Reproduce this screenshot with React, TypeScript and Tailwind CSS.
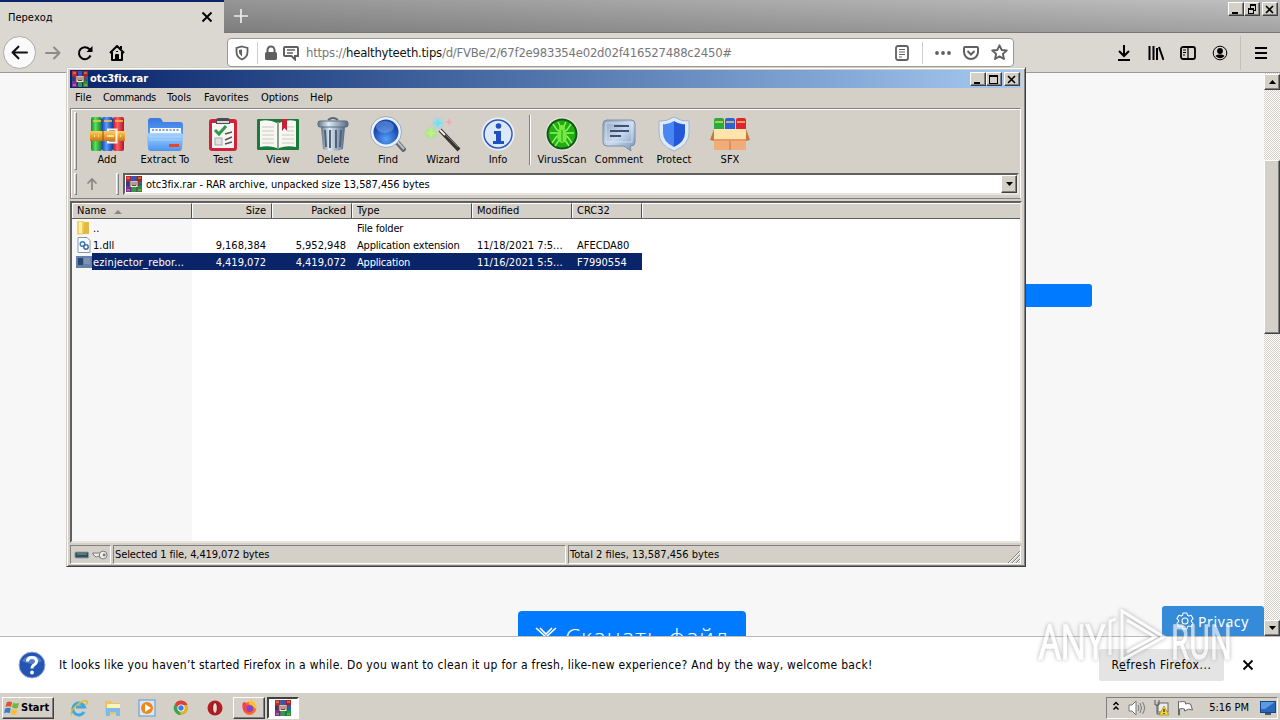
import React from "react";
import clsx from "clsx";

const RarIcon = ({ className }: { className?: string }) => (
    <svg viewBox="0 0 16 16" className={className}>
        <rect x="0" y="0" width="5" height="7" fill="#c8283c" />
        <rect x="5.5" y="0" width="5" height="7" fill="#3d4fc0" />
        <rect x="11" y="0" width="5" height="7" fill="#b02020" />
        <rect x="0" y="9" width="5" height="7" fill="#7b2fa0" />
        <rect x="5.5" y="9" width="5" height="7" fill="#2f9a50" />
        <rect x="11" y="9" width="5" height="7" fill="#1f9440" />
        <path d="M5.2 0v16M10.7 0v16" stroke="#28202c" strokeWidth=".8" />
        <path d="M1 2h3M12 2h3M1 14h3M12 14h3" stroke="#e9a93c" strokeWidth="1" />
        <rect x="0" y="5.5" width="16" height="4.5" fill="#8a3b1c" />
        <rect x="0" y="5.5" width="3" height="4.5" fill="#25407c" />
        <rect x="13" y="5.5" width="3" height="4.5" fill="#2360a8" />
        <rect x="4.5" y="5" width="7" height="6" fill="#f4efe2" />
        <path d="M6 5.500v4h4v-4M8 5.500v4" stroke="#5d3040" fill="none" strokeWidth=".9" />
    </svg>
);

const BooksIcon = () => (
    <svg viewBox="0 0 36 36" className="w-9 h-9">
        <defs>
            <linearGradient id="bkG"><stop stopColor="#138a2c" /><stop offset=".4" stopColor="#5be060" /><stop offset="1" stopColor="#0c7a2a" /></linearGradient>
            <linearGradient id="bkB"><stop stopColor="#1a45b0" /><stop offset=".4" stopColor="#5c9cff" /><stop offset="1" stopColor="#153d9c" /></linearGradient>
            <linearGradient id="bkR"><stop stopColor="#c01428" /><stop offset=".4" stopColor="#ff6060" /><stop offset="1" stopColor="#b01030" /></linearGradient>
            <linearGradient id="bkY" x2="0" y2="1"><stop stopColor="#ffd25a" /><stop offset="1" stopColor="#cf7414" /></linearGradient>
        </defs>
        <rect x="2" y="1" width="11" height="34" rx="2" fill="url(#bkG)" />
        <rect x="13" y="1" width="11" height="34" rx="2" fill="url(#bkB)" />
        <rect x="24" y="1" width="11" height="34" rx="2" fill="url(#bkR)" />
        <path d="M4 5h8M15 5h8M26 5h8" stroke="#ffc83c" strokeWidth="1.6" />
        <path d="M1 15h35v10H1z" fill="url(#bkY)" />
        <path d="M14 15v10" stroke="#9c4a10" />
        <path d="M19 15v-1.500h8.500v13H19V25" fill="none" stroke="#fff3dc" strokeWidth="2" />
        <path d="M18 20h7" stroke="#ffe9c0" strokeWidth="1.600" />
        <path d="M5 20h1M9 20h1M31 20h1" stroke="#fff0a0" strokeWidth="1.6" />
    </svg>
);

const ExtractIcon = () => (
    <svg viewBox="0 0 40 36" className="w-10 h-9">
        <defs>
            <linearGradient id="fdA" x2="0" y2="1"><stop stopColor="#3878e0" /><stop offset="1" stopColor="#5ba0f4" /></linearGradient>
            <linearGradient id="fdB" x2="0" y2="1"><stop stopColor="#a8d4ff" /><stop offset="1" stopColor="#4a94f0" /></linearGradient>
        </defs>
        <path d="M3 5q0-3 3-3h8q2 0 3 2l1 2h17q3 0 3 3v10H3z" fill="url(#fdA)" />
        <path d="M5 12h31v12H5z" fill="#f4f8ff" />
        <path d="M7 14h27" stroke="#8fa4c4" strokeWidth="2" strokeDasharray="2 1.5" />
        <path d="M2 20q0-3 3-3h30q3 0 3 3l-1 12q0 3-3 3H6q-3 0-3-3z" fill="url(#fdB)" />
        <path d="M4 21h32M4 24h32" stroke="#c4e2ff" opacity=".6" />
        <rect x="24" y="28" width="10" height="3" fill="#e8452c" />
    </svg>
);

const TestIcon = () => (
    <svg viewBox="0 0 36 36" className="w-9 h-9">
        <rect x="4" y="3" width="28" height="32" rx="3" fill="#cf2338" />
        <path d="M7 7h22v25H7z" fill="#f5f5f3" />
        <path d="M11 8V4q0-2 3-2h8q3 0 3 2v4z" fill="#4b4b50" />
        <path d="M12 6h12" stroke="#d8d8dc" strokeWidth="2" />
        <path d="M10 14l4 4 7-8" fill="none" stroke="#2c9a48" strokeWidth="3" />
        <path d="M20 18l7-2M20 24l7-3M20 28l7-2" stroke="#555" strokeWidth="1.5" />
        <rect x="10" y="22" width="7" height="7" fill="#e1e1e1" stroke="#aaa" />
    </svg>
);

const ViewIcon = () => (
    <svg viewBox="0 0 44 36" className="w-11 h-9">
        <rect x="1" y="3" width="42" height="31" rx="1" fill="#1a7a3c" />
        <path d="M4 5q9-2 17 2v25q-8-3-17-1zM40 5q-9-2-17 2v25q8-3 17-1z" fill="#f8f8f2" />
        <path d="M22 6v27" stroke="#8aa294" strokeWidth="2" />
        <path d="M6 11h12M6 15h12M6 19h12M6 23h12M6 27h12M26 19h12M26 23h12M26 27h12M31 11h7M31 15h7" stroke="#c8c8c0" />
        <path d="M26 3h5v12l-2.500-3-2.500 3z" fill="#c72238" />
    </svg>
);

const DeleteIcon = () => (
    <svg viewBox="0 0 36 36" className="w-9 h-9">
        <defs><linearGradient id="bin"><stop stopColor="#607489" /><stop offset=".35" stopColor="#e0ebf5" /><stop offset="1" stopColor="#526b86" /></linearGradient></defs>
        <path d="M13 4q5-4 10 0" fill="none" stroke="#59697a" strokeWidth="2" />
        <path d="M6 11h24l-2 22q-10 4-20 0z" fill="url(#bin)" />
        <rect x="3" y="5" width="30" height="6" rx="2" fill="url(#bin)" stroke="#5a6b7c" />
        <path d="M10 14l1 17M15 14v18M21 14v18M26 14l-1 17" stroke="#4f647a" strokeWidth="2" />
    </svg>
);

const FindIcon = () => (
    <svg viewBox="0 0 36 36" className="w-9 h-9">
        <defs><radialGradient id="lens" cx=".5" cy=".75"><stop stopColor="#58a0f8" /><stop offset="1" stopColor="#1746ac" /></radialGradient></defs>
        <path d="M25 24l10 11" stroke="#626870" strokeWidth="5" />
        <path d="M25 23l9 10" stroke="#b8c0c8" strokeWidth="2" />
        <circle cx="16" cy="16" r="14" fill="url(#lens)" stroke="#e9f1fa" strokeWidth="3" />
        <circle cx="16" cy="16" r="15.5" fill="none" stroke="#8293ac" strokeWidth=".7" />
        <ellipse cx="15" cy="11" rx="9" ry="6" fill="#86b6f4" opacity=".45" />
    </svg>
);

const WizardIcon = () => (
    <svg viewBox="0 0 36 36" className="w-9 h-9">
        <path d="M15 14l19 20" stroke="#38342f" strokeWidth="4" />
        <path d="M15 14l5 5" stroke="#f4eded" strokeWidth="2" />
        <path d="M21 19l12 12" stroke="#777" />
        <circle cx="13" cy="7" r="6" fill="#7ee2ee" opacity=".4" />
        <path d="M13 2l1.500 3.500L18 7l-3.500 1.500L13 12l-1.500-3.500L8 7l3.500-1.500z" fill="#72e0f0" />
        <circle cx="6" cy="17" r="6" fill="#9cf06a" opacity=".5" />
        <path d="M6 12l1.500 3.500L11 17l-3.500 1.500L6 22l-1.500-3.500L1 17l3.500-1.500z" fill="#b4f884" />
        <path d="M24 2l1 3 3 1-3 1-1 3-1-3-3-1 3-1z" fill="#f3a5b0" />
    </svg>
);

const InfoIcon = () => (
    <svg viewBox="0 0 36 36" className="w-9 h-9">
        <circle cx="18" cy="18" r="16.5" fill="#e9f1fc" />
        <circle cx="18" cy="18" r="14" fill="#dce9fa" stroke="#3158b8" strokeWidth="1.5" />
        <circle cx="18.5" cy="10" r="2.8" fill="#2150c0" />
        <path d="M14 15h7v10h3v3H13v-3h3v-7h-2z" fill="#2150c0" />
    </svg>
);

const VirusIcon = () => (
    <svg viewBox="0 0 36 36" className="w-9 h-9">
        <circle cx="18" cy="18" r="16.5" fill="#e3f4dd" />
        <circle cx="18" cy="18" r="14.5" fill="#22ac13" stroke="#17551e" strokeWidth="2" />
        <g stroke="#8cf760" strokeWidth="1.4" fill="none">
            <path d="M9 8l4 6 5 2 5-2 4-6M6 17h8M22 17h8M8 27l5-7M28 27l-5-7M11 30l4-6M25 30l-4-6M14 6l3 6M22 6l-3 6" />
        </g>
        <ellipse cx="18" cy="20" rx="5" ry="7" fill="#76e942" />
        <circle cx="18" cy="12" r="3" fill="#76e942" />
        <path d="M18 14v12" stroke="#2a9c1c" />
    </svg>
);

const CommentIcon = () => (
    <svg viewBox="0 0 36 36" className="w-9 h-9">
        <defs><linearGradient id="cmt" x2="1" y2="1"><stop stopColor="#8fa3bd" /><stop offset=".5" stopColor="#c9daee" /><stop offset="1" stopColor="#7593bb" /></linearGradient></defs>
        <path d="M6 4h24q4 0 4 4v18q0 4-4 4h-1l1 5-7-5H6q-4 0-4-4V8q0-4 4-4z" fill="url(#cmt)" stroke="#7a8eac" />
        <path d="M5 7h26v19H5z" fill="none" stroke="#dce8f7" opacity=".8" />
        <path d="M13 10h15M9 15h19M9 20h11" stroke="#3e5272" strokeWidth="2" />
    </svg>
);

const ProtectIcon = () => (
    <svg viewBox="0 0 36 36" className="w-9 h-9">
        <path d="M18 1q8 5 15 4v12q0 12-15 18Q3 29 3 17V5q7 1 15-4z" fill="#dfeaf8" stroke="#a0b4d0" />
        <path d="M18 5q6 4 11 3v9q0 9-11 14z" fill="#2458d8" />
        <path d="M18 5Q12 9 7 8v9q0 9 11 14z" fill="#4a86f2" />
    </svg>
);

const SfxIcon = () => (
    <svg viewBox="0 0 40 36" className="w-10 h-9">
        <rect x="4" y="2" width="10" height="13" rx="2" fill="#26ac40" />
        <rect x="15" y="2" width="10" height="13" rx="2" fill="#2864d8" />
        <rect x="26" y="2" width="10" height="13" rx="2" fill="#dc2434" />
        <path d="M5 6h8M16 6h8M27 6h8" stroke="#ffca48" strokeWidth="1.500" />
        <path d="M4 14h32v20H4z" fill="#e99a64" />
        <path d="M4 25h32v9H4z" fill="#f0ad7c" />
        <path d="M20 25v9" stroke="#c57442" />
        <path d="M4 13h32l1 10H3z" fill="#ffe5ac" />
        <path d="M4 13L0 24l4 1zM36 13l4 11-4 1z" fill="#c9763e" />
    </svg>
);

const tools = [
    { label: "Add", width: "w-[54px]", icon: <BooksIcon /> },
    { label: "Extract To", width: "w-[62px]", icon: <ExtractIcon /> },
    { label: "Test", width: "w-[54px]", icon: <TestIcon /> },
    { label: "View", width: "w-[56px]", icon: <ViewIcon /> },
    { label: "Delete", width: "w-[54px]", icon: <DeleteIcon /> },
    { label: "Find", width: "w-[56px]", icon: <FindIcon /> },
    { label: "Wizard", width: "w-[54px]", icon: <WizardIcon /> },
    { label: "Info", width: "w-[56px]", icon: <InfoIcon /> },
];

const scanTools = [
    { label: "VirusScan", width: "w-[56px]", icon: <VirusIcon /> },
    { label: "Comment", width: "w-[58px]", icon: <CommentIcon /> },
    { label: "Protect", width: "w-[52px]", icon: <ProtectIcon /> },
    { label: "SFX", width: "w-[60px]", icon: <SfxIcon /> },
];

const raised = "bg-[#d4d0c8] border border-t-white border-l-white border-r-[#404040] border-b-[#404040] shadow-[inset_-1px_-1px_0_#808080]";
const sunken = "border border-t-[#808080] border-l-[#808080] border-r-white border-b-white";

const WinButton = ({ kind, className }: { kind: "min" | "max" | "restore" | "close"; className?: string }) => (
    <div className={clsx("w-4 h-3.5 flex items-center justify-center", raised, className)}>
        <svg viewBox="0 0 12 11" className="w-3 h-[11px] shrink-0" fill="none" stroke="#000" shapeRendering="crispEdges">
            {kind === "min" && <path d="M2 9h6" strokeWidth="2" />}
            {kind === "max" && <path d="M1.5 1v8.5h8V1M1 1.5h9M1 2.5h9" />}
            {kind === "restore" && <path d="M4 1.5h6M4 .5h6M4.5 1v3M9.500 1v5H8M2 4.500h6M2 5.500h6M2.500 4v5.500h5V4" />}
            {kind === "close" && <path d="M2 2l7 7M9 2L2 9" strokeWidth="1.6" shapeRendering="auto" />}
        </svg>
    </div>
);

const Tool = ({ label, width, icon }: { label: string; width: string; icon: React.ReactNode }) => (
    <div className={clsx("flex flex-col items-center shrink-0 pt-1", width)}>
        {icon}
        <span className="mt-px leading-[14px] whitespace-nowrap">{label}</span>
    </div>
);

const Grip = () => <div className="w-[3px] shrink-0 border border-t-white border-l-white border-r-[#808080] border-b-[#808080]" />;

const columns = ["w-[120px]", "w-[80px]", "w-[80px]", "w-[120px]", "w-[100px]", "w-[70px]"];
const headers = ["Name", "Size", "Packed", "Type", "Modified", "CRC32"];
const rows = [
    ["..", "", "", "File folder", "", ""],
    ["1.dll", "9,168,384", "5,952,948", "Application extension", "11/18/2021 7:5...", "AFECDA80"],
    ["ezinjector_rebor...", "4,419,072", "4,419,072", "Application", "11/16/2021 5:5...", "F7990554"],
];

const FileIcon = ({ row }: { row: number }) => (
    <svg viewBox="0 0 16 16" className="w-4 h-4 shrink-0">
        {row === 0 && <><path d="M1 1h7l1 13-8 1z" fill="#f2d267" /><path d="M8 2h5v12H7z" fill="#e1b943" /><path d="M3 2h3v11H3z" fill="#fff0a0" /></>}
        {row === 1 && <><path d="M2 .500h9l3 3v12H2z" fill="#fafdff" stroke="#8497ad" /><circle cx="6.500" cy="7" r="2.300" fill="none" stroke="#3a7cbc" strokeWidth="1.500" /><circle cx="10" cy="10" r="2.200" fill="none" stroke="#456c98" strokeWidth="1.500" /></>}
        {row === 2 && <><rect x="0" y="2" width="16" height="12" fill="#6680a8" /><rect x="2" y="4" width="5" height="7" fill="#264870" /><path d="M8 5h6M8 7h6M8 9h6" stroke="#93a6c2" /></>}
    </svg>
);

const WinRar = () => (
    <div className="absolute left-[66px] top-[67px] w-[960px] h-[500px] p-1 flex flex-col text-[11px] bg-[#d4d0c8] border border-t-[#d4d0c8] border-l-[#d4d0c8] border-r-[#404040] border-b-[#404040] shadow-[inset_1px_1px_0_#fff,inset_-1px_-1px_0_#808080]">
        <div className="h-[18px] -mt-0.5 -ml-px shrink-0 flex items-center bg-linear-to-r from-[#0a246a] to-[#a6caf0]">
            <RarIcon className="w-4 h-4 ml-0.5" />
            <span className="ml-0.5 pt-px font-bold text-white tracking-[-0.05px]">otc3fix.rar</span>
            <WinButton kind="min" className="ml-auto" />
            <WinButton kind="max" />
            <WinButton kind="close" className="ml-0.5 mr-px" />
        </div>
        <nav className="h-5 pt-px shrink-0 flex items-center pl-1 gap-3">
            <span className="w-4">File</span>
            <span className="w-[52px] tracking-[-0.4px]">Commands</span>
            <span className="w-[25px]">Tools</span>
            <span className="w-[45px]">Favorites</span>
            <span className="w-[37px] tracking-[-0.1px]">Options</span>
            <span>Help</span>
        </nav>
        <div className="h-[91px] -ml-px shrink-0 flex flex-col border border-[#808080] border-r-white shadow-[inset_1px_1px_0_#fff]">
            <div className="h-[61px] flex pl-[3px] pt-[3px]">
                <Grip />
                <div className="flex ml-[3px]">
                    {tools.map((t) => <Tool key={t.label} {...t} />)}
                    <div className="w-0.5 h-[50px] mt-[3px] mx-[3px] border-l border-l-[#808080] border-r border-r-white" />
                    {scanTools.map((t) => <Tool key={t.label} {...t} />)}
                </div>
            </div>
            <div className="h-[22px] mt-[3px] flex pl-[3px] pr-px">
                <Grip />
                <svg viewBox="0 0 14 14" className="w-3.5 h-3.5 mt-1 ml-2" fill="none" stroke="#898782" strokeWidth="1.700"><path d="M7 13V2M2.500 6.500L7 2l4.500 4.500" /></svg>
                <div className="w-[17px]" />
                <Grip />
                <div className="ml-1 h-[22px] flex-1 flex items-center bg-white border-2 border-t-[#606060] border-l-[#606060] border-r-[#e8e5df] border-b-[#e8e5df]">
                    <RarIcon className="w-4 h-4 ml-px" />
                    <span className="ml-1 pt-[3px] tracking-[-0.065px]">otc3fix.rar - RAR archive, unpacked size 13,587,456 bytes</span>
                    <div className={clsx("ml-auto w-4 h-[18px] flex items-center justify-center", raised)}>
                        <svg viewBox="0 0 7 4" className="w-[7px] h-1"><path d="M0 0h7L3.500 4z" /></svg>
                    </div>
                </div>
            </div>
        </div>
        <div className="mt-0.5 flex-1 min-h-0 flex flex-col bg-white border-2 -ml-px -mr-px border-t-[#606060] border-l-[#606060] border-r-[#e8e5df] border-b-[#e8e5df]">
            <div className="h-4 shrink-0 flex bg-[#d4d0c8] border-b border-[#606060]">
                {headers.map((h, i) => (
                    <div key={h} className={clsx("flex items-center pt-px pl-1 pr-[5px] border-t border-l border-t-white border-l-white border-r border-r-[#505050]", columns[i], (i === 1 || i === 2) && "justify-end")}>
                        {h}
                        {i === 0 && <svg viewBox="0 0 8 4" className="w-2 h-1 ml-2"><path d="M4 0l4 4H0z" fill="#898681" /></svg>}
                    </div>
                ))}
                <div className="flex-1 border-t border-l border-white" />
            </div>
            <div className="flex-1 bg-linear-to-r from-[#f7f7f7] from-[120px] to-white to-[120px]">
                {rows.map((row, r) => (
                    <div key={row[0]} className="flex h-[17px] items-center w-[570px]">
                        <div className="w-[120px] h-[17px] flex items-center pl-1">
                            <FileIcon row={r} />
                            <span className={clsx("flex-1 h-[17px] pt-px leading-[17px] pl-px whitespace-nowrap", r === 2 && "bg-[#0a246a] text-white tracking-[0.15px]")}>{row[0]}</span>
                        </div>
                        {row.slice(1).map((cell, i) => (
                            <span key={i} className={clsx("h-[17px] pt-px leading-[17px] pl-[5px] pr-1.5 whitespace-nowrap shrink-0", columns[i + 1], i < 2 && "text-right", i === 2 && "tracking-[-0.2px]", r === 2 && "bg-[#0a246a] text-white")}>{cell}</span>
                        ))}
                    </div>
                ))}
            </div>
        </div>
        <div className="h-[19px] mt-0.5 -mb-0.5 shrink-0 flex gap-0.5 items-stretch -ml-px">
            <div className={clsx("w-[41px] flex items-center pl-0.5", sunken)}>
                <svg viewBox="0 0 38 14" className="w-[38px] h-3.5">
                    <rect x="2" y="4" width="14" height="6" rx="1" fill="#344e58" stroke="#8a9ba0" />
                    <path d="M4 6h10" stroke="#81a6a7" />
                    <path d="M20 5h8v5l-2-2-2 1-2-1z" fill="#eee" stroke="#777" />
                    <circle cx="31" cy="7" r="4" fill="#eee" stroke="#777" /><circle cx="32" cy="7" r="1.500" fill="#777" />
                </svg>
            </div>
            <div className={clsx("w-[453px] leading-[17px] pl-px tracking-[-0.1px]", sunken)}>Selected 1 file, 4,419,072 bytes</div>
            <div className={clsx("flex-1 leading-[17px] pl-px flex justify-between", sunken)}>
                Total 2 files, 13,587,456 bytes
                <svg viewBox="0 0 13 13" className="w-[13px] h-[13px] mt-1" stroke="#808080"><path d="M1 13L13 1M5 13l8-8M9 13l4-4" /><path d="M2 13L13 2M6 13l7-7M10 13l3-3" stroke="#fff" /></svg>
            </div>
        </div>
    </div>
);

const UrlBar = () => (
    <div className="w-[787px] h-[29px] flex items-center bg-white border border-[#999] rounded-sm text-[#606060]">
        <svg viewBox="0 0 16 16" className="w-4 h-4 ml-1.5" fill="none" stroke="currentColor" strokeWidth="1.800"><path d="M8 1.500l5.500 1.500v4q0 5-5.500 7.500Q2.500 12 2.500 7V3z" /><path d="M8 4.500v7Q5 9.500 5 7V5z" fill="currentColor" stroke="none" /></svg>
        <div className="w-px h-[22px] bg-[#ccc] ml-[7px]" />
        <svg viewBox="0 0 16 16" className="w-4 h-4 ml-[5px]" fill="currentColor"><rect x="2" y="7" width="12" height="8" rx="1.500" /><path d="M4.500 8V5a3.500 3.500 0 017 0v3" fill="none" stroke="currentColor" strokeWidth="2" /></svg>
        <svg viewBox="0 0 16 16" className="w-4 h-4 ml-1" fill="none" stroke="currentColor" strokeWidth="2"><path d="M2 2h12q1 0 1 1v8h-3v3.500L8.500 11H2q-1 0-1-1V3q0-1 1-1z" /><path d="M4 5h8M4 8h6" strokeWidth="1.400" /></svg>
        <span className="ml-[7px] w-[430px] pt-px text-[13px] whitespace-nowrap tracking-[-0.24px] text-[#777]">https://<span className="text-[#111]">healthyteeth.tips</span>/d/FVBe/2/67f2e983354e02d02f416527488c2450#</span>
        <svg viewBox="0 0 16 16" className="w-4 h-4 ml-auto" fill="none" stroke="currentColor" strokeWidth="1.800"><rect x="2" y="1" width="12" height="14" rx="2" /><path d="M5 4.500h6M5 7h6M5 9.500h6M5 12h3" strokeWidth="1" /></svg>
        <div className="w-px h-[22px] bg-[#ccc] ml-3" />
        <svg viewBox="0 0 16 16" className="w-4 h-4 ml-3" fill="currentColor"><circle cx="2" cy="8" r="1.900" /><circle cx="8" cy="8" r="1.900" /><circle cx="14" cy="8" r="1.900" /></svg>
        <svg viewBox="0 0 16 16" className="w-4 h-4 ml-3" fill="none" stroke="currentColor" strokeWidth="2"><path d="M2 2h12q1 0 1 1v4a7 7 0 01-14 0V3q0-1 1-1z" /><path d="M4.500 6L8 9.500 11.500 6" /></svg>
        <svg viewBox="0 0 16 16" className="w-[17px] h-[17px] ml-3 mr-[5px]" fill="none" stroke="currentColor" strokeWidth="1.800" strokeLinejoin="round"><path d="M8 1.200l2 4.400 4.800.5-3.600 3.200 1 4.800L8 11.700l-4.200 2.400 1-4.800L1.200 6.100 6 5.600z" /></svg>
    </div>
);

const Browser = () => (
    <>
        <header className="h-[33px] shrink-0 flex bg-[linear-gradient(180deg,transparent,#00000028),linear-gradient(90deg,#8c8c8c,#c0c0c0)] border-b border-[#777]">
            <div className="w-56 h-[33px] flex items-center bg-[#dbd8d2] border-t-2 border-[#0a246a] pl-2 pr-[11px] text-[11px]">
                <span className="pt-px">Переход</span>
                <svg viewBox="0 0 12 12" className="w-3 h-3 ml-auto -mt-0.5" stroke="#000" strokeWidth="1.900"><path d="M1.500 1.500l9 9M10.500 1.500l-9 9" /></svg>
            </div>
            <svg viewBox="0 0 14 14" className="w-3.5 h-3.5 mt-[9px] ml-2.5" stroke="#ececec" strokeWidth="1.700"><path d="M7 0v14M0 7h14" /></svg>
            <div className="ml-auto flex pt-0.5 pr-0.5">
                <WinButton kind="min" />
                <WinButton kind="restore" />
                <WinButton kind="close" className="ml-0.5" />
            </div>
        </header>
        <div className="h-10 shrink-0 flex items-center bg-[#dbd8d2] border-b border-[#999]">
            <div className="w-[33px] h-[33px] ml-[3px] rounded-full bg-[#fafafa] border border-[#aaa] flex items-center justify-center">
                <svg viewBox="0 0 16 16" className="w-[17px] h-[17px]" fill="none" stroke="#111" strokeWidth="2" strokeLinecap="round" strokeLinejoin="round"><path d="M15 8H1.500M7 2.500L1.500 8 7 13.500" /></svg>
            </div>
            <svg viewBox="0 0 16 16" className="w-4 h-4 ml-[9px]" fill="none" stroke="#8c8b88" strokeWidth="2" strokeLinecap="round" strokeLinejoin="round"><path d="M1 8h13.500M9 2.500L14.500 8 9 13.500" /></svg>
            <svg viewBox="0 0 16 16" className="w-4 h-4 ml-4" fill="none" stroke="#000" strokeWidth="2"><path d="M13.500 10.500A6 6 0 1112.300 4L14 6" /><path d="M15.500 1v6h-6z" fill="#000" stroke="none" /></svg>
            <svg viewBox="0 0 16 16" className="w-4 h-4 ml-4 mr-[102px]" fill="none" stroke="#000" strokeWidth="2" strokeLinejoin="round"><path d="M1 8l7-7 7 7M3 7v8h10V7M12 4V1" /><path d="M7 15v-5h2v5M8 6v1" /></svg>
            <UrlBar />
            <div className="ml-auto flex items-center text-black">
                <svg viewBox="0 0 16 16" className="w-4 h-4" fill="none" stroke="currentColor" strokeWidth="2"><path d="M8 0v11M3 6l5 5 5-5M2 15h12" /></svg>
                <svg viewBox="0 0 16 16" className="w-4 h-4 ml-4" fill="none" stroke="currentColor" strokeWidth="2"><path d="M1.500 1v14M5.500 1v14M9 3v12M11 2l4.500 13" /></svg>
                <svg viewBox="0 0 16 16" className="w-4 h-4 ml-4" fill="none" stroke="currentColor" strokeWidth="1.800"><rect x="1" y="2" width="14" height="12" rx="2" /><path d="M8 2v12M3 5h3M3 7.500h3M3 10h2" strokeWidth="1.200" /></svg>
                <svg viewBox="0 0 16 16" className="w-4 h-4 ml-4" fill="currentColor"><circle cx="8" cy="8" r="6.800" fill="none" stroke="currentColor" strokeWidth="1" /><circle cx="8" cy="6" r="2.900" /><path d="M3.500 11q1-1.500 3-1.500h3q2 0 3 1.500-4 4.500-9 0z" /></svg>
                <div className="w-px h-[34px] bg-[#c4c1bb] ml-3" />
                <svg viewBox="0 0 16 16" className="w-4 h-4 ml-3 mr-[11px]" stroke="currentColor" strokeWidth="2"><path d="M2 3h12M2 8h12M2 13h12" /></svg>
            </div>
        </div>
        <main className="h-[563px] shrink-0 flex bg-[#f7f7f8]">
            <div className="flex-1 relative overflow-hidden">
                <div className="mt-[211px] ml-[172px] w-[920px] h-[23px] rounded-[3px] bg-[#007bff]" />
                <div className="mt-[304px] ml-[518px] w-[228px] h-12 rounded-[4px] bg-[#007bff] text-white flex justify-center gap-2 pt-3 text-[24px] leading-7 tracking-[0.95px] whitespace-nowrap font-['Open_Sans','Noto_Sans',sans-serif] font-light">
                    <svg viewBox="0 0 22 22" className="w-[22px] h-[22px] mt-1" fill="none" stroke="#fff" strokeWidth="1.600"><path d="M1 1l20 18M21 1L1 19M5 1l6 6 6-6" /></svg>
                    Скачать файл
                </div>
                <div className="absolute right-0 bottom-0 w-[102px] h-[30px] rounded-t-[3px] bg-[#338bda] text-white flex items-center pl-3.5 gap-1 text-[14px]">
                    <svg viewBox="0 0 18 18" className="w-[18px] h-[18px]" fill="none" stroke="#fff" strokeWidth="1.100" strokeLinejoin="round"><path d="M7 1h4l.5 2.300 1.300.7 2.300-.7 2 3.400L15.400 8.300v1.400l1.700 1.600-2 3.400-2.300-.7-1.300.7L11 17H7l-.5-2.300-1.300-.7-2.300.7-2-3.400 1.700-1.600V8.300L.9 6.700l2-3.400 2.300.7 1.300-.7z" /><circle cx="9" cy="9" r="3" /></svg>
                    <span className="font-['Noto_Sans',sans-serif] tracking-[0.6px]">Privacy</span>
                </div>
            </div>
            <div className="w-4 flex flex-col bg-[repeating-conic-gradient(#d4d0c8_0_25%,#fff_0_50%)] bg-size-[2px_2px]">
                <div className={clsx("h-4 mt-px flex items-center justify-center", raised)}><svg viewBox="0 0 7 4" className="w-[7px] h-1"><path d="M0 4h7L3.500 0z" /></svg></div>
                <div className={clsx("h-[174px] mt-[70px]", raised)} />
                <div className={clsx("h-4 mt-auto flex items-center justify-center", raised)}><svg viewBox="0 0 7 4" className="w-[7px] h-1"><path d="M0 0h7L3.500 4z" /></svg></div>
            </div>
        </main>
        <div className="h-14 shrink-0 flex items-center bg-white border-t border-[#bbb]">
            <svg viewBox="0 0 28 28" className="w-7 h-7 ml-[18px]"><circle cx="14" cy="14" r="13" fill="#2454b4" stroke="#98add5" /><path d="M4 10a11 9 0 0120 0q-10 6-20 0z" fill="#537dcc" /><path d="M9.500 10.500q0-4 4.500-4t4.500 4q0 2-2.500 3.500-2 1-2 3.500" fill="none" stroke="#fff" strokeWidth="3" /><circle cx="14" cy="21.500" r="1.900" fill="#fff" /></svg>
            <span className="ml-[13px] pt-px text-[12px] whitespace-nowrap tracking-[0.307px]">It looks like you haven’t started Firefox in a while. Do you want to clean it up for a fresh, like-new experience? And by the way, welcome back!</span>
            <button className="ml-auto w-[125px] h-8 bg-[#e4e4e4] rounded-[2px] text-[12px] whitespace-nowrap tracking-[0.55px]">R<u>e</u>fresh Firefox...</button>
            <svg viewBox="0 0 12 12" className="w-3 h-3 ml-[18px] mr-[26px]" stroke="#000" strokeWidth="1.800"><path d="M1.500 1.500l9 9M10.500 1.500l-9 9" /></svg>
        </div>
    </>
);

const Taskbar = () => (
    <footer className="h-7 shrink-0 flex items-center bg-[#d4d0c8] border-t border-white pt-1 pb-0.5 text-[11px]">
        <div className={clsx("w-[52px] h-[22px] ml-0.5 flex items-center font-bold pl-px", raised)}>
            <svg viewBox="0 0 18 16" className="w-[17px] h-4 shrink-0"><path d="M3 2q3-2 5.500 0L7.500 7Q5 5.500 1.500 7z" fill="#e8502c" /><path d="M9.500 2.500q3 1.500 6.500 0L14.500 8q-3 1.500-6-.5z" fill="#72b83c" /><path d="M1.200 8.500q3.500-1.500 6 0L6 13.500q-3-1.500-6 0z" fill="#347ed0" /><path d="M8.200 9q3 2 6 .5L13 14.500q-3 1.500-6-.5z" fill="#f6be34" /></svg>
            <span className="pt-px">Start</span>
        </div>
        <div className="flex items-center ml-4 gap-4">
            <svg viewBox="0 0 18 18" className="w-[18px] h-[18px]" fill="none"><path d="M14 13a6 6 0 11.500-5H6" stroke="#39a8e4" strokeWidth="3" /><path d="M2 16Q-1 13 7 6q8-6 10-4 1 1-1 4" stroke="#eab928" strokeWidth="1.500" /></svg>
            <svg viewBox="0 0 18 18" className="w-[18px] h-[18px]"><path d="M1 2h6l1 2h8v11H1z" fill="#e9c65c" /><path d="M3 5h13v4H3z" fill="#fff3b8" /><path d="M2 9h14v8h-4v-4H6v4H2z" fill="#7dbce8" /></svg>
            <svg viewBox="0 0 18 18" className="w-[18px] h-[18px]"><rect x="1" y="1" width="16" height="16" fill="#d6e9fa" stroke="#5b98d0" /><circle cx="9" cy="9" r="6" fill="#f08718" /><path d="M7 5l6 4-6 4z" fill="#fff" /></svg>
            <svg viewBox="0 0 18 18" className="w-[18px] h-[18px]"><circle cx="9" cy="9" r="7" fill="#ddb52d" /><path d="M3 5a7 7 0 0112.500 1H9L6 10z" fill="#dd4034" /><path d="M3 5l4 7 2 4A7 7 0 013 5z" fill="#34a455" /><circle cx="9" cy="9" r="3.600" fill="#fff" /><circle cx="9" cy="9" r="2.700" fill="#397fe5" /></svg>
            <svg viewBox="0 0 18 18" className="w-[18px] h-[18px]"><circle cx="9" cy="9" r="7.500" fill="#b51c20" /><ellipse cx="9" cy="9" rx="2.400" ry="5.500" fill="#e8dcd8" stroke="#7e1015" /></svg>
        </div>
        <div className={clsx("w-8 h-[22px] ml-[9px] flex items-center justify-center", raised)}>
            <svg viewBox="0 0 18 18" className="w-[17px] h-[17px]"><circle cx="9" cy="10" r="7" fill="#ff6b24" /><path d="M10 0q7 4 6.500 11Q12 7 8 5z" fill="#ffc42e" /><path d="M1.500 5Q3 3 4 3l2 3 4 1-3 4 4 3q-8 2-9.500-5z" fill="#f64052" /><circle cx="9.500" cy="10" r="3.500" fill="#7c46d2" /></svg>
        </div>
        <div className="w-8 h-[22px] ml-0.5 flex items-center justify-center bg-white border-2 border-t-[#404040] border-l-[#404040] border-r-white border-b-white"><RarIcon className="w-4 h-4" /></div>
        <div className={clsx("ml-auto mr-0.5 w-[172px] h-[22px] flex items-center", sunken)}>
            <svg viewBox="0 0 8 10" className="w-2 h-2.5 ml-[5px] -mt-1" fill="none" stroke="#000" strokeWidth="1.500"><path d="M1.500 4L4 1.500 6.500 4M1.500 8.500L4 6l2.500 2.500" /></svg>
            <svg viewBox="0 0 18 16" className="w-[18px] h-4 ml-2" fill="none" stroke="#777"><path d="M1 5h3l4-4v14l-4-4H1z" fill="#fff" /><path d="M10 5q2 3 0 6M12 3q3 5 0 10M14.500 2q4 6 0 12" /></svg>
            <svg viewBox="0 0 18 18" className="w-[18px] h-[18px] ml-[7px]"><rect x="5" y="4" width="10" height="9" fill="#e8edf0" stroke="#666" /><path d="M2 1v5h4V1M4 6v9h4" fill="none" stroke="#555" /><path d="M11 7l5 9H6z" fill="#f6d532" stroke="#95811c" strokeWidth=".6" /><path d="M11 10v3M11 14v1" stroke="#000" /></svg>
            <svg viewBox="0 0 16 16" className="w-4 h-4 ml-1.5" fill="#fff" stroke="#666"><path d="M1.500 1v14h1V9q3-1 5 0v2q4-3 8-1l-2-6q-3-1-5 0V2q-3-1-6 0" /></svg>
            <span className="ml-auto pt-px whitespace-nowrap">5:16 PM</span>
            <svg viewBox="0 0 16 14" className="w-4 h-3.5 ml-[11px] mr-px"><rect x=".500" y=".500" width="15" height="11" fill="#2869bd" stroke="#17458b" /><path d="M1 1h14L5 8H1z" fill="#5b9ce0" /><path d="M5 13h6" stroke="#555" strokeWidth="2" /></svg>
        </div>
    </footer>
);

const Watermark = () => (
    <svg viewBox="0 0 200 60" className="absolute left-[1036px] top-[606px] w-[200px] h-[60px] opacity-65 drop-shadow-[0_0_2px_#888]" fill="#fff" stroke="#fff" fontFamily="Open Sans" fontSize="47">
        <text x="3" y="53" textLength="66" lengthAdjust="spacingAndGlyphs" strokeWidth="1.500">ANY</text>
        <path d="M80 13l-6 2v34M86 5v49l42-23zM91 14l28 17-28 15" fill="none" strokeWidth="3" />
        <text x="135" y="53" textLength="61" lengthAdjust="spacingAndGlyphs" strokeWidth="1.500">RUN</text>
    </svg>
);

export default function App() {
    return (
        <div className="relative w-[1280px] h-[720px] overflow-hidden flex flex-col text-black font-['DejaVu_Sans_Condensed','DejaVu_Sans',sans-serif]">
            <Browser />
            <Taskbar />
            <WinRar />
            <Watermark />
        </div>
    );
}
